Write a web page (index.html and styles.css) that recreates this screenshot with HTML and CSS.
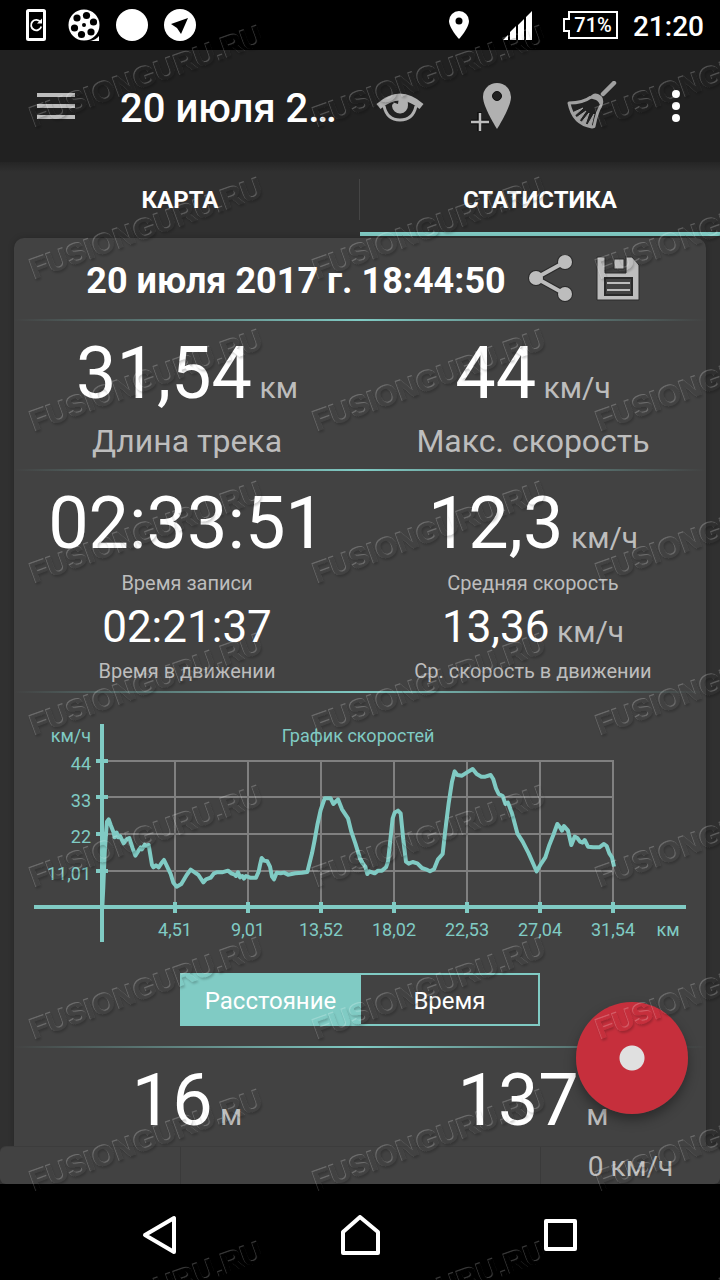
FILE: index.html
```html
<!DOCTYPE html>
<html lang="ru">
<head>
    <meta charset="UTF-8">
    <meta name="viewport" content="width=device-width, initial-scale=1.0">
    <title>Статистика трека</title>
    <link rel="stylesheet" href="styles.css">
</head>
<body>
    <div class="status-bar">
        <div class="status-left">
            <svg width="32" height="32" viewBox="0 0 32 32">
                <rect x="7.500" y="1.500" width="17" height="29" rx="1" fill="none" stroke="#fff" stroke-width="3"/>
                <path d="M20.500 13a5.200 5.200 0 1 0 .8 4.500" fill="none" stroke="#fff" stroke-width="1.800"/>
                <path d="M22 9.500v5h-5z" fill="#fff"/>
            </svg>
            <svg width="32" height="32" viewBox="0 0 32 32">
                <circle cx="16" cy="16" r="15.500" fill="#fff"/>
                <path d="M22 32q6-1 9-5v5z" fill="#fff"/>
                <circle cx="16" cy="16" r="2"/>
                <circle cx="18.500" cy="6.500" r="3.600"/>
                <circle cx="25.500" cy="13" r="3.600"/>
                <circle cx="23" cy="23" r="3.600"/>
                <circle cx="13.500" cy="25.500" r="3.600"/>
                <circle cx="6.500" cy="19" r="3.600"/>
                <circle cx="9" cy="9" r="3.600"/>
                <path d="M23 31q5-2 7-6" fill="none" stroke="#000"/>
            </svg>
            <svg width="32" height="32" viewBox="0 0 32 32">
                <circle cx="16" cy="16" r="16" fill="#fff"/>
            </svg>
            <svg width="32" height="32" viewBox="0 0 32 32">
                <circle cx="16" cy="16" r="16" fill="#fff"/>
                <path d="M24 9 7 15l6 4 4 6z"/>
            </svg>
        </div>
        <div class="status-right">
            <svg width="20" height="28" viewBox="0 0 20 28">
                <path d="M10 0a10 10 0 0 0-10 10c0 7 10 18 10 18s10-11 10-18a10 10 0 0 0-10-10z" fill="#fff"/>
                <circle cx="10" cy="10" r="3.500"/>
            </svg>
            <svg class="signal" width="32" height="30" viewBox="0 0 32 30">
                <path d="M1 30l5-5v5zM8 30v-8l6-6v14zM16 30v-15l6-6v21zM24 30v-23l6-6v29z" fill="#fff"/>
            </svg>
            <svg class="battery" width="56" height="28" viewBox="0 0 56 28">
                <path d="M6 1h48v26h-48v-7h-5v-12h5z" fill="none" stroke="#fff" stroke-width="2"/>
                <text x="30" y="21" class="battery-text">71%</text>
            </svg>
            <span class="clock">21:20</span>
        </div>
    </div>

    <header class="app-bar">
        <button class="menu-btn" aria-label="Меню">
            <svg width="38" height="26" viewBox="0 0 38 26">
                <path d="M0 2h38M0 13h38M0 24h38" stroke="#bdbdbd" stroke-width="4"/>
            </svg>
        </button>
        <h1>20 июля 2…</h1>
        <button class="icon-btn" aria-label="Показать">
            <svg width="50" height="50" viewBox="0 0 50 50">
                <path d="M1.500 23Q25 2 48.500 23l-4 5Q25 11 5.500 28z" fill="#b0b0b0"/>
                <path d="M9 25q3 14 16 14t16-14" fill="none" stroke="#b0b0b0" stroke-width="3"/>
                <path d="M17 21l6 2 1-7q9 0 9 8a8 8 0 0 1-16 1q0-2 2-3z" fill="#b0b0b0"/>
            </svg>
        </button>
        <button class="icon-btn" aria-label="Добавить точку">
            <svg width="50" height="50" viewBox="4 0 50 50">
                <path d="M30 2a14 14 0 0 0-14 14c0 10 14 32 14 32s14-22 14-32a14 14 0 0 0-14-14z" fill="#b0b0b0"/>
                <circle cx="30" cy="15" r="4.500" fill="#212121" stroke="#111"/>
                <path d="M3 41h19M12.500 31v19" stroke="#111" stroke-width="5"/>
                <path d="M4 41h18M13 32v18" stroke="#bdbdbd" stroke-width="2.500"/>
            </svg>
        </button>
        <button class="icon-btn" aria-label="Очистить">
            <svg width="50" height="50" viewBox="0 0 50 50">
                <path d="M36 13 47 2" stroke="#a0a0a0" stroke-width="4.500" stroke-linecap="round"/>
                <path d="M24 16q-8 6-22 6 4 21 23 24l2-.500q3-15 7-21" fill="none" stroke="#a0a0a0" stroke-width="3" stroke-linejoin="round"/>
                <path d="M22 17q4-6 9-4t5 6q1 3-2 8-2-7-5-8t-7-2z" fill="#a0a0a0"/>
                <path d="M5 32l11-5-9 8zM9 37l10-7-7 10zM14 42l8-10-4 12zM20 45l7-12-3 13z" fill="#a0a0a0" stroke="#a0a0a0"/>
            </svg>
        </button>
        <button class="more-btn" aria-label="Ещё">
            <svg width="8" height="32" viewBox="0 0 8 32">
                <circle cx="4" cy="4" r="4" fill="#fff"/>
                <circle cx="4" cy="16" r="4" fill="#fff"/>
                <circle cx="4" cy="28" r="4" fill="#fff"/>
            </svg>
        </button>
    </header>

    <nav class="tabs">
        <button class="tab">КАРТА</button>
        <button class="tab active">СТАТИСТИКА</button>
    </nav>

    <main>
        <div class="panel">
            <div class="panel-header">
                <h2>20 июля 2017 г. 18:44:50</h2>
                <button aria-label="Поделиться">
                    <svg width="48" height="48" viewBox="0 0 48 48">
                        <g fill="#bdbdbd" stroke="#2a2a2a" stroke-width="2">
                            <circle cx="39" cy="7" r="7"/>
                            <circle cx="39" cy="39" r="7"/>
                            <circle cx="10" cy="23" r="7"/>
                        </g>
                        <path d="M39 7 10 23l29 16" fill="none" stroke="#2a2a2a" stroke-width="6"/>
                        <path d="M39 7 10 23l29 16" fill="none" stroke="#bdbdbd" stroke-width="4"/>
                        <g fill="#bdbdbd">
                            <circle cx="39" cy="7" r="7"/>
                            <circle cx="39" cy="39" r="7"/>
                            <circle cx="10" cy="23" r="7"/>
                        </g>
                    </svg>
                </button>
                <button aria-label="Сохранить">
                    <svg width="48" height="48" viewBox="0 1 48 48">
                        <path d="M3 3h35l7 8v35h-42z" fill="#bdbdbd" stroke="#2a2a2a"/>
                        <path d="M11 2h21v17h-21z" fill="#424242"/>
                        <path d="M11 2v17h21v-17" fill="none" stroke="#2a2a2a"/>
                        <path d="M20 5h10v10h-10z" fill="#bdbdbd" stroke="#2a2a2a"/>
                        <path d="M11 24h27v17h-27z" fill="#424242" stroke="#2a2a2a" stroke-width="2"/>
                        <path d="M13 29h23M13 36h23" stroke="#bdbdbd" stroke-width="2"/>
                    </svg>
                </button>
            </div>

            <section class="stats">
                <div class="stat">
                    <div class="value">31,54<span class="unit"> км</span></div>
                    <div class="label label-big">Длина трека</div>
                </div>
                <div class="stat">
                    <div class="value">44<span class="unit"> км/ч</span></div>
                    <div class="label label-big">Макс. скорость</div>
                </div>
            </section>

            <section class="stats">
                <div class="stat">
                    <div class="value">02:33:51</div>
                    <div class="label">Время записи</div>
                    <div class="value value-small">02:21:37</div>
                    <div class="label">Время в движении</div>
                </div>
                <div class="stat">
                    <div class="value">12,3<span class="unit"> км/ч</span></div>
                    <div class="label">Средняя скорость</div>
                    <div class="value value-small">13,36<span class="unit"> км/ч</span></div>
                    <div class="label">Ср. скорость в движении</div>
                </div>
            </section>

            <section class="chart-box">
                <svg class="chart" viewBox="14 691 692 282">
                    <path class="grid" d="M102 761h512M102 797h512M102 834h512M102 871h512M175 761v146M248 761v146M321 761v146M394 761v146M467 761v146M540 761v146M613 761v146"/>
                    <path class="axis" d="M34 907h652M102 724v218"/>
                    <path class="ticks" d="M96 761h12M96 797h12M96 834h12M96 871h12M175 902v11M248 902v11M321 902v11M394 902v11M467 902v11M540 902v11M613 902v11"/>
                    <!-- скорость по расстоянию, шаг 1/3 пикселя -->
                    <g class="line" transform="scale(.33333)">
                        <polyline transform="translate(60 2130)" points="247,590 250,530 254,430 258,370 261,335 266,328 272,345 280,365 284,382 290,368 294,382 300,378 311,400 320,388 328,384 338,415 346,437 358,418 362,412 366,418 374,404 378,408 386,405 396,465 400,472 408,466 416,472 424,460 432,450 444,475 452,492 460,518 470,530 484,522 500,495 512,479 524,487 535,495 550,517 558,508 572,503 582,490 590,487 606,487 624,482 634,490 644,494 648,498 654,487 660,502 667,498 672,506 678,498 690,503 708,503 716,485 720,465 725,444 732,452 742,454 750,470 756,500 762,508 770,488 782,490 792,488 804,494 826,490 846,488 862,486 876,430 884,390 892,345 902,300 914,265 932,265 940,282 954,268 966,298 984,325 994,365 1006,400 1020,445 1028,460"/>
                        <polyline transform="translate(1080 2130)" points="0,445 8,460 16,470 22,492 28,484 44,490 54,482 66,482 78,472 84,455 90,400 98,325 104,308 114,302 122,310 130,390 138,455 146,461 158,456 172,460 186,474 198,478 210,484 222,478 234,448 248,432 256,360 266,280 276,215 284,184 292,195 306,197 320,188 338,177 350,192 364,200 376,200 392,195 400,208 408,235 416,252 428,258 436,282 444,278 456,310 472,370 488,395 506,430 520,462 530,484 544,460 556,442 568,405 580,375 592,342 600,352 606,362 612,348 624,362 634,405 644,380 652,384 660,395 668,398 674,390 684,410 700,412 718,412 732,402 740,408 748,430 756,442 762,470"/>
                    </g>
                    <g class="chart-y">
                        <text x="91" y="742">км/ч</text>
                        <text x="91" y="770">44</text>
                        <text x="91" y="807">33</text>
                        <text x="91" y="843">22</text>
                        <text x="91" y="880">11,01</text>
                    </g>
                    <g class="chart-x">
                        <text x="358" y="742">График скоростей</text>
                        <text x="175" y="936">4,51</text>
                        <text x="248" y="936">9,01</text>
                        <text x="321" y="936">13,52</text>
                        <text x="394" y="936">18,02</text>
                        <text x="467" y="936">22,53</text>
                        <text x="540" y="936">27,04</text>
                        <text x="613" y="936">31,54</text>
                        <text x="668" y="936">км</text>
                    </g>
                </svg>
                <div class="toggle">
                    <button class="selected">Расстояние</button>
                    <button>Время</button>
                </div>
            </section>

            <section class="stats stats-last">
                <div class="stat">
                    <div class="value">16<span class="unit"> м</span></div>
                </div>
                <div class="stat">
                    <div class="value">137<span class="unit"> м</span></div>
                </div>
            </section>
        </div>
        <button class="record-btn" aria-label="Запись"></button>
    </main>

    <div class="bottom-info">
        <div></div>
        <div></div>
        <div>0 км/ч</div>
    </div>

    <nav class="nav-bar">
        <button aria-label="Назад">
            <svg width="40" height="40" viewBox="0 0 40 40">
                <path d="M34 3v34L5 20z"/>
            </svg>
        </button>
        <button aria-label="Домой">
            <svg width="40" height="40" viewBox="0 0 40 40">
                <path d="M3 38v-21L20 2l18 15v21z"/>
            </svg>
        </button>
        <button aria-label="Недавние">
            <svg width="40" height="40" viewBox="0 0 40 40">
                <path d="M6 6h29v28h-29z"/>
            </svg>
        </button>
    </nav>

    <svg class="watermark" aria-hidden="true">
        <defs>
            <filter id="emboss" x="-5%" y="-20%" width="110%" height="140%">
                <feOffset in="SourceAlpha" dx="1" dy="1" result="in1"/>
                <feComposite in="SourceAlpha" in2="in1" operator="out" result="lightEdge"/>
                <feFlood flood-color="#fff" flood-opacity=".22"/>
                <feComposite in2="lightEdge" operator="in" result="light"/>
                <feOffset in="SourceAlpha" dx="1" dy="2"/>
                <feGaussianBlur stdDeviation="1" result="low"/>
                <feComposite in="low" in2="SourceAlpha" operator="out" result="darkEdge"/>
                <feFlood flood-color="#000" flood-opacity=".2"/>
                <feComposite in2="darkEdge" operator="in" result="dark"/>
                <feMerge>
                    <feMergeNode in="dark"/>
                    <feMergeNode in="light"/>
                </feMerge>
            </filter>
            <pattern id="marks" x="20" y="152" width="283" height="152" patternUnits="userSpaceOnUse">
                <g filter="url(#emboss)">
                    <text transform="translate(14 127) rotate(-20)">FUSIONGURU.RU</text>
                </g>
            </pattern>
        </defs>
        <rect width="100%" height="100%" fill="url(#marks)"/>
    </svg>
</body>
</html>
```
FILE: styles.css
```css
* {
    box-sizing: border-box;
}
body {
    font-family: Roboto, "Liberation Sans", sans-serif;
    background-color: #303030;
    color: white;
    margin: 0;
    min-height: 100vh;
    display: flex;
    flex-direction: column;
    position: relative;
}
button {
    font-family: inherit;
    color: inherit;
    background: none;
    border: none;
    padding: 0;
    cursor: pointer;
}
svg {
    display: block;
}
h1, h2 {
    margin: 0;
}

/* status bar */
.status-bar {
    height: 50px;
    background: black;
    display: flex;
    justify-content: space-between;
    align-items: center;
    padding: 0 16px 0 20px;
}
.status-left {
    display: flex;
    gap: 16px;
}
.status-right {
    display: flex;
    align-items: center;
}
.signal {
    margin-left: 33px;
}
.battery {
    margin-left: 29px;
    margin-right: 14px;
}
.battery-text {
    font-size: 20px;
    font-weight: 500;
    fill: white;
    text-anchor: middle;
}
.clock {
    font-size: 28px;
    font-weight: 500;
    padding-top: 2px;
}

/* app bar */
.app-bar {
    height: 112px;
    background: #212121;
    display: flex;
    align-items: center;
    padding: 0 8px 0 32px;
}
.menu-btn {
    width: 48px;
    display: flex;
    justify-content: center;
}
.app-bar h1 {
    flex: 1;
    margin-left: 40px;
    padding-top: 4px;
    font-size: 40px;
    font-weight: 500;
    white-space: nowrap;
}
.icon-btn {
    width: 96px;
    display: flex;
    justify-content: center;
}
.more-btn {
    width: 72px;
    display: flex;
    justify-content: center;
}

/* tabs */
.tabs {
    display: flex;
    height: 74px;
    background: linear-gradient(#252525, #303030 10px);
}
.tab {
    flex: 1;
    font-size: 24px;
    font-weight: 700;
    padding-top: 5px;
    border-bottom: 4px solid transparent;
    position: relative;
}
.tab.active {
    border-bottom-color: #80cbc4;
}
.tab.active::before {
    content: "";
    position: absolute;
    left: -1px;
    top: 17px;
    width: 1px;
    height: 41px;
    background: #454545;
}

/* panel */
main {
    flex: 1;
    display: flex;
    position: relative;
    padding: 2px 14px 0;
}
.panel {
    flex: 1;
    background: #424242;
    border-radius: 10px 10px 0 0;
    box-shadow: 0 0 6px rgba(0, 0, 0, 0.2);
}
.panel-header {
    height: 81px;
    display: flex;
    justify-content: center;
    align-items: center;
    gap: 20px;
    padding-left: 8px;
}
.panel-header h2 {
    font-size: 36px;
    font-weight: 700;
    line-height: 42px;
    padding-top: 4px;
}
.stats, .chart-box {
    background: linear-gradient(90deg, #424242, #80cbc4 50%, #424242) top / 100% 2px no-repeat;
}
.stats {
    display: flex;
    padding: 13px 0 8px;
}
.stats-last {
    padding-bottom: 0;
}
.stat {
    flex: 1;
    display: flex;
    flex-direction: column;
    gap: 5px;
    text-align: center;
}
.value {
    font-size: 72px;
    line-height: 84px;
}
.value-small {
    font-size: 44px;
    line-height: 54px;
}
.unit {
    font-size: 30px;
    line-height: 1;
    color: #bdbdbd;
}
.label {
    font-size: 20px;
    line-height: 24px;
    color: #bdbdbd;
}
.label-big {
    font-size: 32px;
    line-height: 40px;
}

/* speed chart */
.chart-box {
    padding-bottom: 20px;
}
.chart {
    width: 100%;
}
.grid {
    stroke: #808080;
    stroke-width: 2;
}
.axis {
    stroke: #80cbc4;
    stroke-width: 4;
}
.ticks {
    stroke: #80cbc4;
    stroke-width: 4;
}
.line {
    fill: none;
    stroke: #80cbc4;
    stroke-width: 12;
    stroke-linejoin: round;
}
.chart-x, .chart-y {
    font-size: 18px;
    fill: #80cbc4;
}
.chart-x {
    text-anchor: middle;
}
.chart-y {
    text-anchor: end;
}
.toggle {
    display: flex;
    width: 52%;
    height: 53px;
    margin: 0 auto;
    border: 2px solid #80cbc4;
}
.toggle button {
    flex: 1;
    font-size: 24px;
    padding-top: 2px;
}
.toggle .selected {
    background: #80cbc4;
}
.toggle .selected + button {
    border-left: 2px solid #80cbc4;
}

.record-btn {
    position: absolute;
    right: 32px;
    bottom: 32px;
    width: 112px;
    height: 112px;
    border-radius: 50%;
    background: radial-gradient(circle, #e0e0e0 12px, #c62f3c 13px);
    box-shadow: 0 6px 12px rgba(0, 0, 0, 0.35);
}

/* bottom */
.bottom-info {
    display: grid;
    grid-template-columns: 1fr 2fr 1fr;
    height: 38px;
    overflow: hidden;
    background: #424242;
    border-top: 1px solid #3c3c3c;
    border-radius: 6px;
    position: relative;
    font-size: 28px;
    line-height: 40px;
    text-align: center;
    color: #bdbdbd;
}
.bottom-info div + div {
    border-left: 1px solid #3a3a3a;
}
.nav-bar {
    height: 96px;
    background: black;
    display: flex;
    justify-content: center;
    align-items: center;
    padding: 6px 60px 0;
}
.nav-bar button {
    flex: 1;
    display: flex;
    justify-content: center;
}
.nav-bar path {
    fill: none;
    stroke: white;
    stroke-width: 4;
    stroke-linejoin: round;
}

.watermark {
    position: absolute;
    left: 0;
    top: 0;
    width: 100%;
    height: 100%;
    pointer-events: none;
    font: bold 29px "Liberation Sans", sans-serif;
}
.watermark text {
    stroke: black;
    stroke-width: 1px;
}
```
